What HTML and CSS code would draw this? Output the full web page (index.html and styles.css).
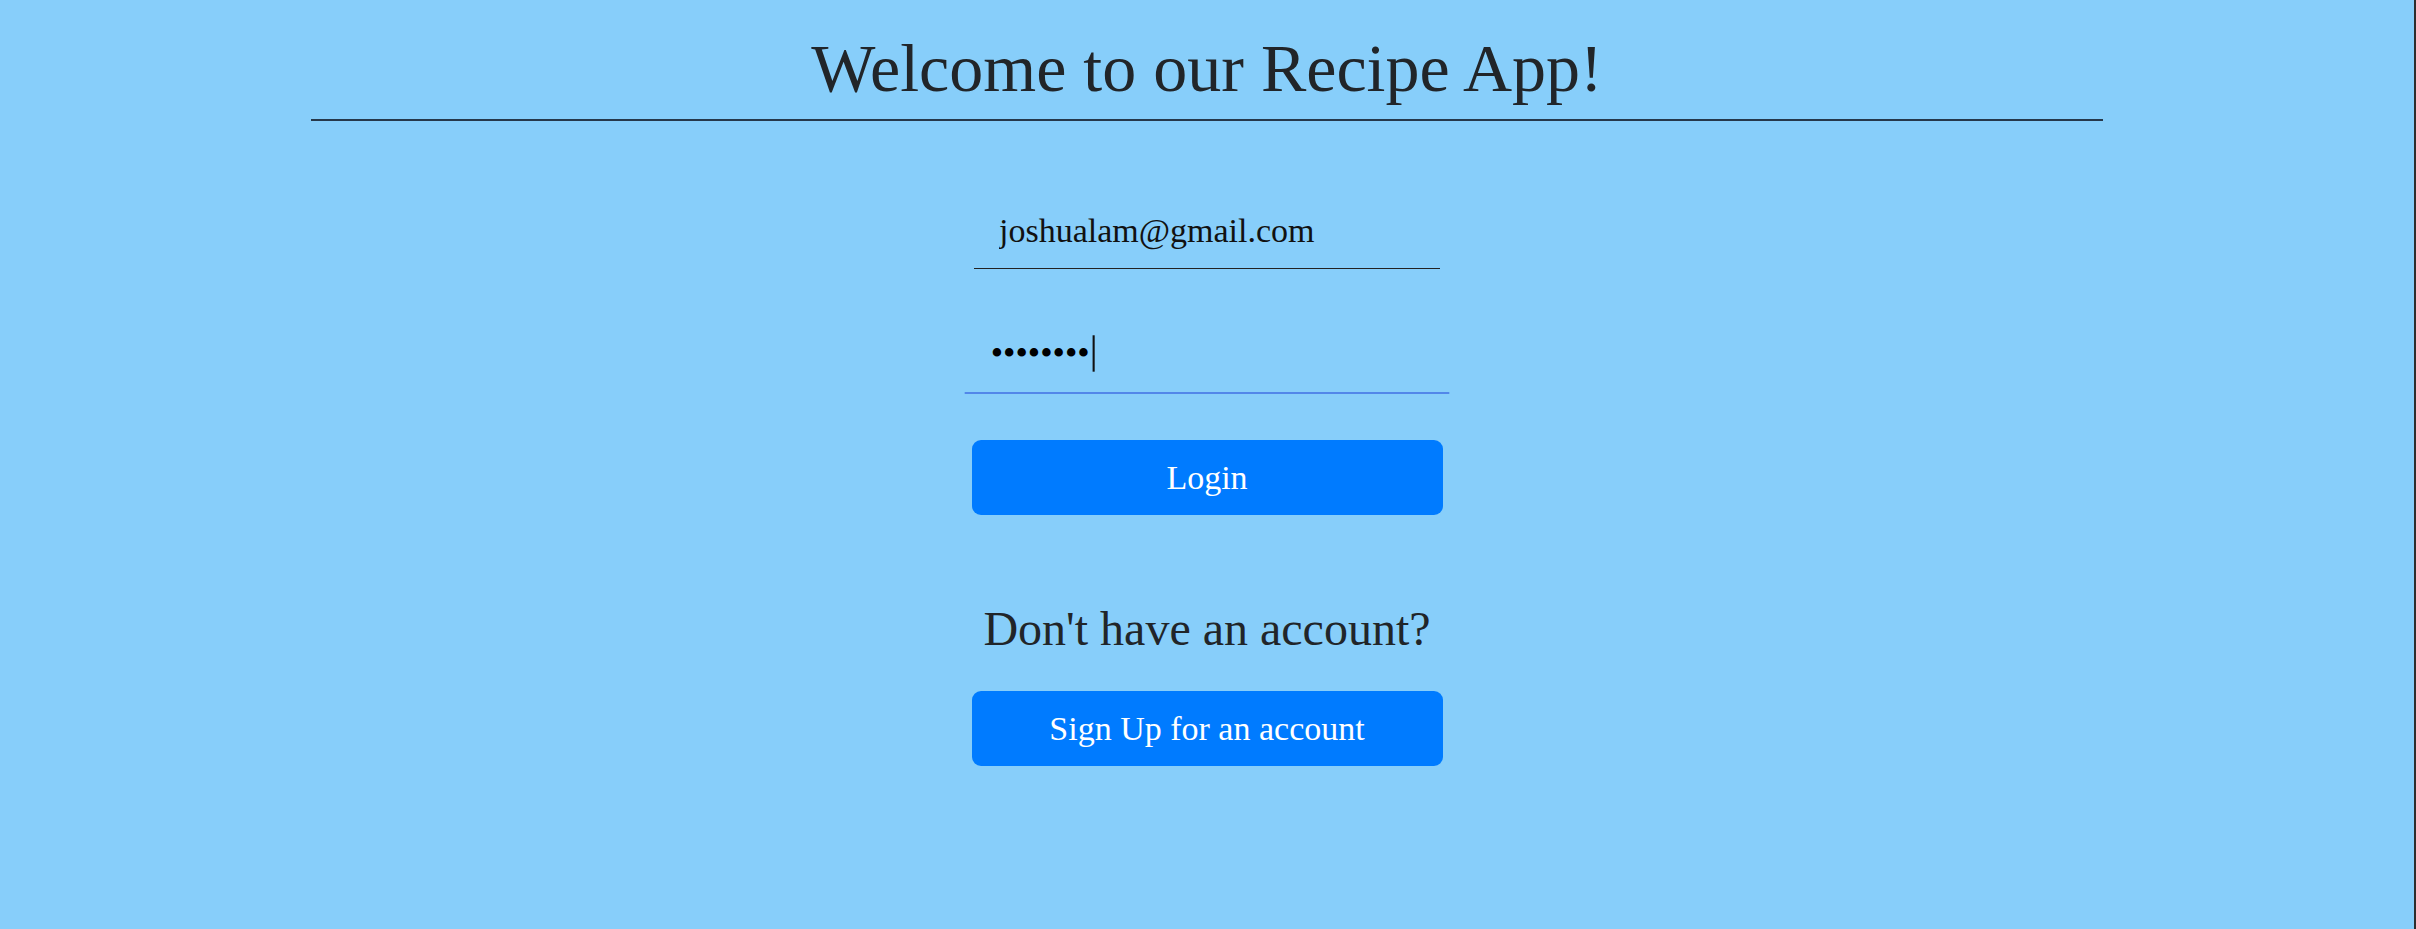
FILE: index.html
```html
<!DOCTYPE html>
<html lang="en">
<head>
<meta charset="utf-8">
<title>Recipe App</title>
<link rel="stylesheet" href="styles.css">
</head>
<body>
<main class="page">
  <header class="masthead">
    <h1 class="title">Welcome to our Recipe App!</h1>
    <hr class="rule">
  </header>
  <section class="auth">
    <div class="auth-inner">
      <form class="login-form">
        <input class="field" type="email" value="joshualam@gmail.com" aria-label="Email">
        <div class="field-wrap">
          <input class="field field--focused" type="password" value="12345678" aria-label="Password">
          <span class="caret" aria-hidden="true"></span>
        </div>
        <button class="btn btn--login" type="button">Login</button>
      </form>
      <h2 class="prompt">Don't have an account?</h2>
      <button class="btn btn--signup" type="button">Sign Up for an account</button>
    </div>
  </section>
</main>
</body>
</html>
```

FILE: styles.css
```css
*, *::before, *::after { box-sizing: border-box; }
html, body { margin: 0; }
body {
  background: #87cefa;
  min-height: 100vh;
  border-right: 2px solid #2d2d2d;
  font-family: "Liberation Serif", serif;
  color: #212529;
}
.masthead { width: 1792px; margin: 0 auto; padding-top: 27px; }
.title {
  margin: 0;
  font-size: 68px;
  line-height: 82px;
  font-weight: 400;
  text-align: center;
}
.rule { margin: 10px 0 0; border: 0; border-top: 2px solid #26384a; }
.auth { display: flex; justify-content: center; padding-top: 72px; }
.auth-inner { width: 471px; display: flex; flex-direction: column; align-items: center; }
.login-form { display: flex; flex-direction: column; align-items: center; width: 100%; }
.field {
  display: block;
  width: 466px;
  height: 76px;
  padding: 0 25px;
  border: 0;
  border-bottom: 1px solid #222;
  background: transparent;
  font-family: inherit;
  font-size: 34px;
  color: #111;
  outline: none;
}
.field-wrap { position: relative; margin-top: 47px; transform: scale(1.04); }
.field--focused { border-bottom: 1.5px solid #2448d8; color: #000; }
.caret {
  position: absolute;
  left: 123px;
  top: 20px;
  width: 1.5px;
  height: 35px;
  background: #111;
}
.btn {
  display: block;
  width: 471px;
  height: 75px;
  margin-top: 48px;
  border: 0;
  border-radius: 9px;
  background: #007bff;
  color: #fff;
  font-family: inherit;
  font-size: 34px;
  cursor: pointer;
}
.prompt { margin: 85px 0 0; font-size: 48px; line-height: 58px; font-weight: 400; white-space: nowrap; }
.btn--signup { margin-top: 33px; }
```
